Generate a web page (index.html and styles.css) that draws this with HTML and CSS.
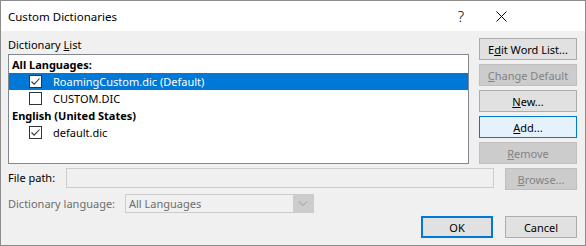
FILE: index.html
```html
<!DOCTYPE html>
<html lang="en">
<head>
  <meta charset="UTF-8">
  <title>Custom Dictionaries</title>
  <link rel="stylesheet" href="styles.css">
</head>
<body>
  <div class="window">
    <div class="titlebar">
      <span class="title">Custom Dictionaries</span>
      <span class="caption-btn help">?</span>
      <span class="caption-btn close">
        <svg width="11" height="11" viewBox="0 0 11 11"><path d="M0.5 0.5 L10.5 10.5 M10.5 0.5 L0.5 10.5" stroke="#000" stroke-width="1" fill="none"/></svg>
      </span>
    </div>

    <div class="content">
      <div class="top">
        <div class="list-pane">
          <div class="list-label">Dictionary <u>L</u>ist</div>
          <div class="listbox">
            <div class="row group">All Languages:</div>
            <div class="row item selected">
              <span class="check checked"><svg width="11" height="11" viewBox="0 0 11 11"><path d="M1.5 5.5 L4.2 8.2 L9.5 2.5" stroke="#333" stroke-width="1.1" fill="none"/></svg></span>
              <span>RoamingCustom.dic (Default)</span>
            </div>
            <div class="row item">
              <span class="check"></span>
              <span>CUSTOM.DIC</span>
            </div>
            <div class="row group">English (United States)</div>
            <div class="row item">
              <span class="check checked"><svg width="11" height="11" viewBox="0 0 11 11"><path d="M1.5 5.5 L4.2 8.2 L9.5 2.5" stroke="#333" stroke-width="1.1" fill="none"/></svg></span>
              <span>default.dic</span>
            </div>
          </div>
        </div>

        <div class="buttons">
          <button class="btn">E<u>d</u>it Word List...</button>
          <button class="btn disabled"><u>C</u>hange Default</button>
          <button class="btn"><u>N</u>ew...</button>
          <button class="btn hot"><u>A</u>dd...</button>
          <button class="btn disabled"><u>R</u>emove</button>
        </div>
      </div>

      <div class="file-row">
        <span class="field-label path-label">File path:</span>
        <span class="textbox"></span>
        <button class="btn small disabled"><u>B</u>rowse...</button>
      </div>

      <div class="lang-row">
        <span class="field-label lang-label">Dictionary lan<u>g</u>uage:</span>
        <span class="combo">
          <span class="combo-text">All Languages</span>
          <span class="combo-arrow">
            <svg width="10" height="6" viewBox="0 0 10 6"><path d="M1 0.5 L5 4.5 L9 0.5" stroke="#b0b0b0" stroke-width="1.2" fill="none"/></svg>
          </span>
        </span>
      </div>

      <div class="actions">
        <button class="btn small default">OK</button>
        <button class="btn small">Cancel</button>
      </div>
    </div>
  </div>
</body>
</html>
```

FILE: styles.css
```css
body {
  margin: 0;
  background: #f0f0f0;
}
.window {
  width: 586px;
  height: 246px;
  box-sizing: border-box;
  border: 1px solid #8c8c8c;
  background: #f0f0f0;
  display: flex;
  flex-direction: column;
  font-family: "Noto Sans", "Open Sans", sans-serif;
  font-size: 11px;
  color: #000;
}
.titlebar {
  height: 30px;
  background: #fff;
  display: flex;
  align-items: center;
  padding-left: 7px;
}
.title {
  flex: 1;
  font-size: 11.5px;
}
.caption-btn {
  width: 40px;
  height: 30px;
  display: flex;
  align-items: center;
  justify-content: center;
}
.help {
  font-size: 15px;
  font-weight: 300;
}
.close {
  margin-right: 64px;
}
.content {
  flex: 1;
  padding: 6px 8px 0 7px;
  display: flex;
  flex-direction: column;
}
.top {
  display: flex;
}
.list-pane {
  width: 461px;
}
.list-label {
  height: 17px;
  line-height: 15px;
}
.listbox {
  height: 110px;
  box-sizing: border-box;
  border: 1px solid #828790;
  background: #fff;
  padding-top: 1px;
}
.row {
  height: 17px;
  display: flex;
  align-items: center;
  white-space: nowrap;
}
.group {
  padding-left: 3px;
  font-weight: 700;
}
.item {
  padding-left: 20px;
}
.selected {
  background: #0078d7;
  color: #fff;
}
.check {
  width: 13px;
  height: 13px;
  box-sizing: border-box;
  border: 1px solid #333;
  background: #fff;
  margin-right: 11px;
  display: flex;
  align-items: center;
  justify-content: center;
}
.buttons {
  margin-left: 10px;
  width: 98px;
  padding-top: 1px;
  display: flex;
  flex-direction: column;
  gap: 4px;
}
.btn {
  height: 22px;
  width: 98px;
  box-sizing: border-box;
  border: 1px solid #adadad;
  background: #e1e1e1;
  font-family: inherit;
  font-size: 11px;
  color: #000;
  padding: 0;
}
.btn.small {
  width: 72px;
}
.btn.disabled {
  background: #cccccc;
  border-color: #bfbfbf;
  color: #838383;
}
.btn.hot {
  background: #e5f1fb;
  border-color: #0078d7;
}
.btn.default {
  border: 2px solid #0078d7;
}
.file-row {
  margin-top: 4px;
  height: 22px;
  display: flex;
  align-items: flex-start;
}
.field-label {
  line-height: 20px;
}
.path-label {
  width: 58px;
}
.textbox {
  width: 428px;
  height: 20px;
  box-sizing: border-box;
  border: 1px solid #cccccc;
  background: #f0f0f0;
  margin-right: 11px;
}
.lang-row {
  margin-top: 4px;
  height: 19px;
  display: flex;
}
.lang-label {
  width: 117px;
  line-height: 19px;
  color: #6d6d6d;
}
.combo {
  width: 189px;
  height: 19px;
  box-sizing: border-box;
  border: 1px solid #cccccc;
  display: flex;
}
.combo-text {
  flex: 1;
  padding-left: 3px;
  line-height: 17px;
  color: #6d6d6d;
}
.combo-arrow {
  width: 20px;
  background: #cccccc;
  display: flex;
  align-items: center;
  justify-content: center;
}
.actions {
  margin-top: 3px;
  display: flex;
  justify-content: flex-end;
  gap: 12px;
}
```
